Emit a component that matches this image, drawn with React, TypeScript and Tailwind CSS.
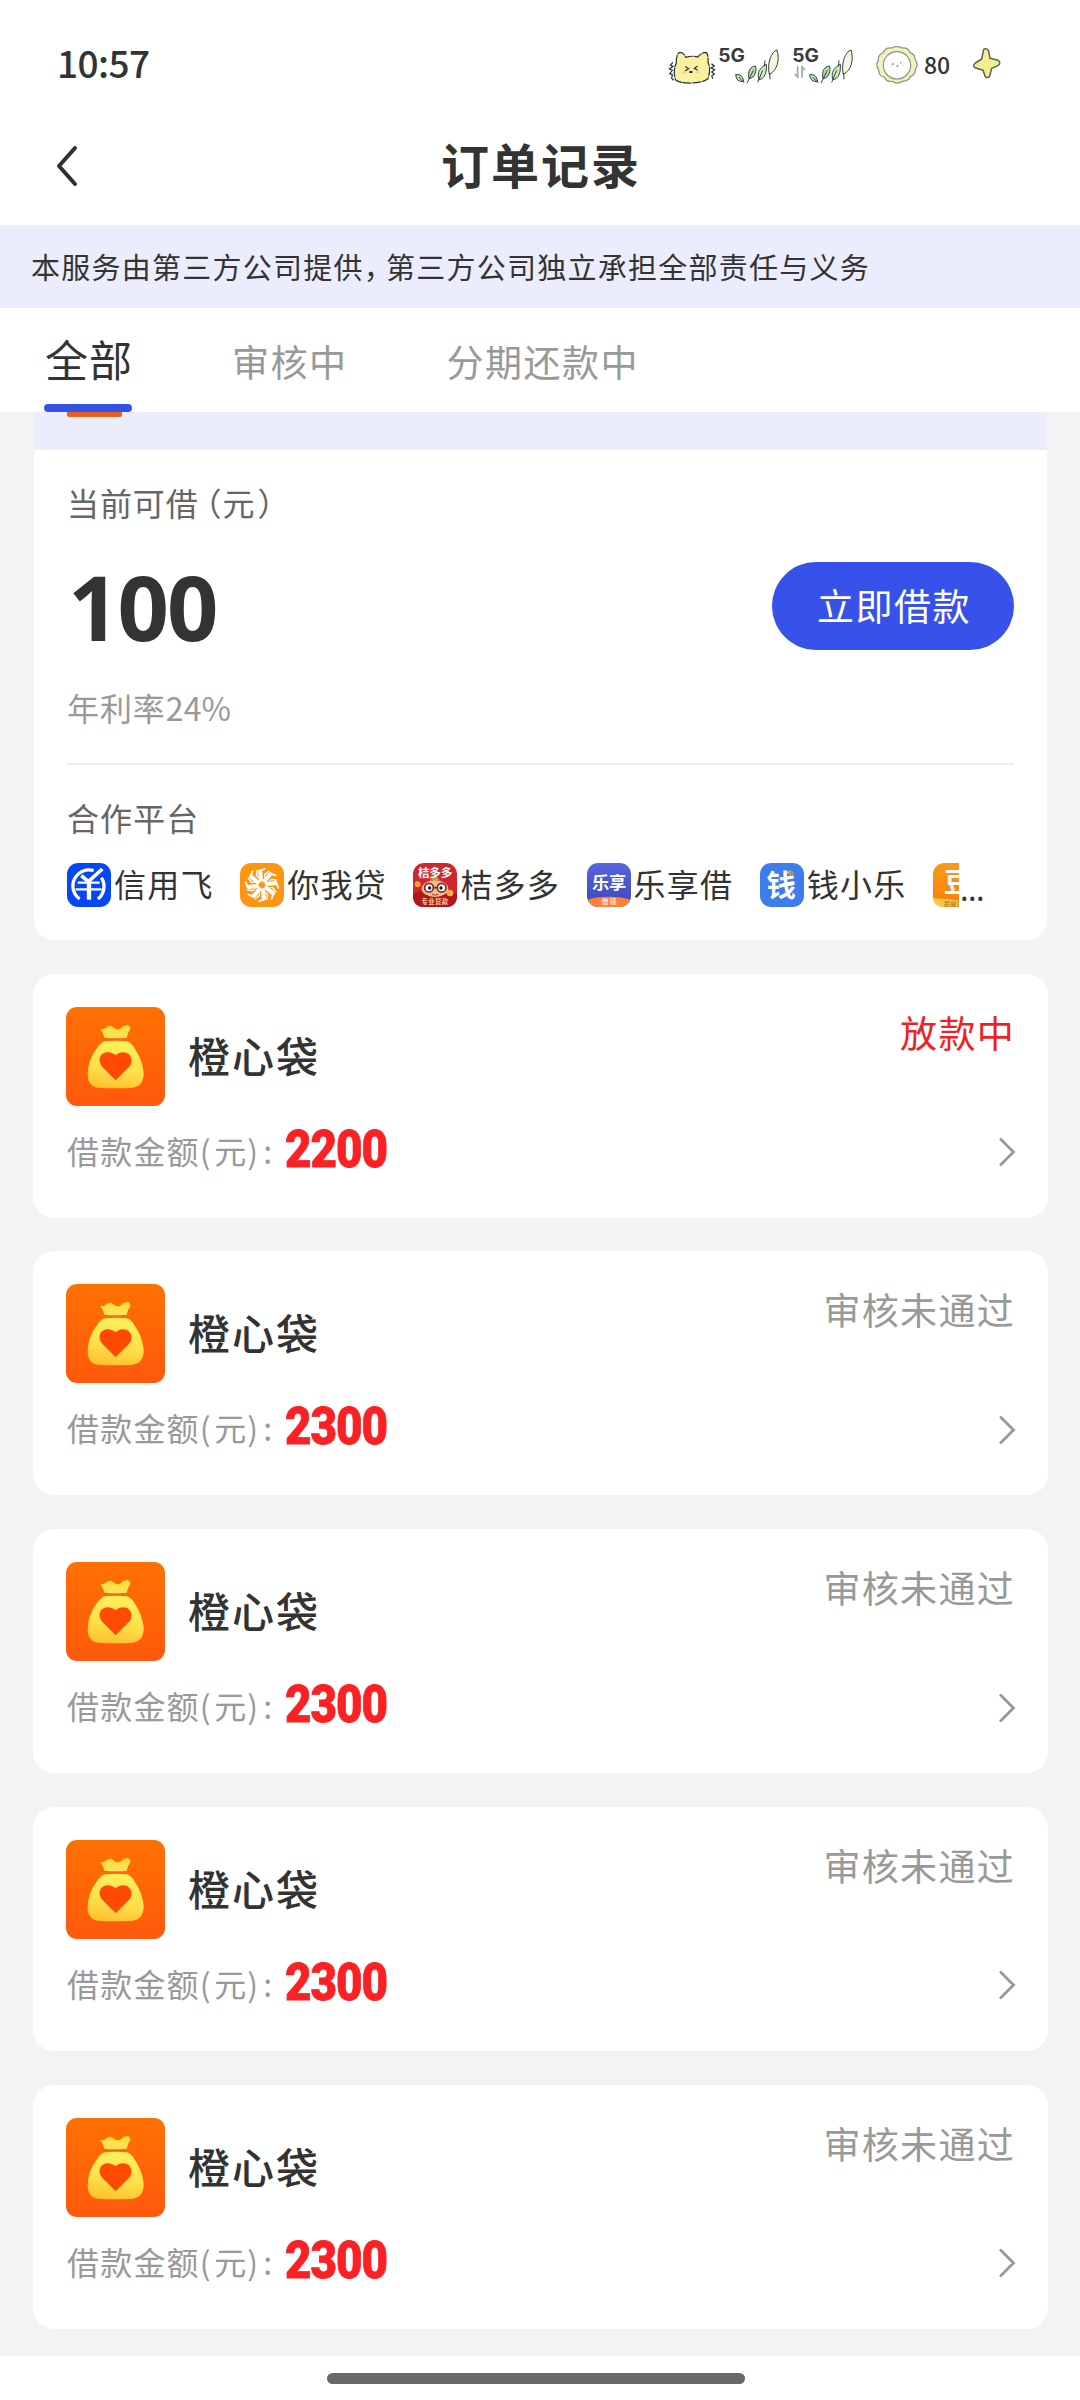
import React, { useState } from 'react';

interface Order {
  id: number;
  name: string;
  amount: number;
  status: string;
  active?: boolean;
}

const ORDERS: Order[] = [
  { id: 1, name: '橙心袋', amount: 2200, status: '放款中', active: true },
  { id: 2, name: '橙心袋', amount: 2300, status: '审核未通过' },
  { id: 3, name: '橙心袋', amount: 2300, status: '审核未通过' },
  { id: 4, name: '橙心袋', amount: 2300, status: '审核未通过' },
  { id: 5, name: '橙心袋', amount: 2300, status: '审核未通过' },
];

const TABS = ['全部', '审核中', '分期还款中'];

const App: React.FC = () => {
  const [activeTab, setActiveTab] = useState('全部');

  return (
    <div className="flex h-[2400px] w-[1080px] flex-col overflow-hidden bg-white font-['Noto_Sans_CJK_SC',sans-serif] text-[#333]">
      <StatusBar />

      {/* Header */}
      <header className="grid h-[115px] shrink-0 grid-cols-3 items-center">
        <button className="-mt-[4px] pl-[54px]">
          <svg width="26" height="42" viewBox="0 0 26 42" fill="none">
            <path d="M21 3 L5 21 L21 39" stroke="#2f2f2f" strokeWidth="4" strokeLinecap="round" strokeLinejoin="round" />
          </svg>
        </button>
        <h1 className="-mt-[9px] pl-[2px] text-center text-[48px] leading-[60px] font-bold tracking-[2px] whitespace-nowrap">订单记录</h1>
      </header>

      <div className="flex h-[83px] shrink-0 items-center bg-[#ebedfd] pl-[31px] text-[29px] leading-[40px] tracking-[1.25px] whitespace-nowrap">
        <p className="-mt-[2px]">
          本服务由第三方公司提供<span className="tracking-[-6.8px]">，</span>第三方公司独立承担全部责任与义务
        </p>
      </div>

      {/* Tabs */}
      <nav className="flex h-[104px] shrink-0 pl-[44px]">
        {TABS.map((tab, i) => (
          <button
            key={tab}
            onClick={() => setActiveTab(tab)}
            className={`relative flex h-full items-center whitespace-nowrap ${i === 0 ? '' : i === 1 ? 'ml-[99px]' : 'ml-[99px]'} ${
              tab === activeTab ? 'pb-[4px] pl-px text-[43px] tracking-[1px]' : 'pt-[3px] text-[37px] tracking-[1.5px] text-[#999]'
            }`}
          >
            <span>{tab}</span>
            {tab === activeTab && <i className="absolute bottom-0 left-0 h-2 w-[88px] rounded-full bg-[#3452e4]" />}
          </button>
        ))}
      </nav>

      {/* Scrolled list */}
      <main className="flex h-[1944px] shrink-0 flex-col overflow-hidden bg-[#f3f3f3] px-[33px]">
        <CreditCard />
        <div className="mt-[33.5px] flex flex-col gap-[33.75px]">
          {ORDERS.map((o) => (
            <OrderCard key={o.id} order={o} />
          ))}
        </div>
      </main>

      <footer className="flex flex-1 justify-center pt-[17px] pr-[8px]">
        <div className="h-[11px] w-[418px] rounded-full bg-[#696969]" />
      </footer>
    </div>
  );
};

const StatusBar: React.FC = () => (
  <div className="flex h-[110px] shrink-0 items-start pl-[57px]">
    <span className="mt-[42px] w-[610px] text-[37px] leading-[40px] font-medium tracking-[-0.6px]">10:57</span>
    <svg className="mt-[50px]" width="50" height="36" viewBox="80 90 150 108" fill="none" stroke="#26303c" strokeWidth="3.6" strokeLinecap="round">
      <path d="M108 130 C107 110 112 98 119 97 C128 97 132 103 137 112 Q154 106 172 111 Q182 99 196 97 Q205 99 203 128 C211 141 208 164 202 177 Q184 189 152 189 Q118 190 106 180 C99 164 101 143 108 130Z" fill="#f9f0a0" strokeDasharray="24 5" />
      <path d="M136 140 l9 6 -10 6 M171 139 l-9 6 9 5" strokeWidth="3.5" />
      <path d="M149 156 h5" strokeWidth="6" />
      <path d="M97 128 l-7 7 8 4 -11 8 9 4 -8 10 8 3 -2 11 5 5 M214 132 l8 6 -10 6 11 5 -9 7 8 6 -8 6 3 7" strokeWidth="3.5" />
      <path d="M126 157 h8 M168 157 h8" stroke="#f5c6a0" strokeWidth="5" />
    </svg>
    <Signal />
    <Signal arrows />
    <svg className="mt-[45px] ml-[17px]" width="44" height="40" viewBox="704 75 132 120" fill="none">
      <path
        d="M754 84 Q770 76 785 84 Q804 82 809 98 Q825 103 824 119 Q837 133 825 147 Q827 163 811 169 Q804 185 788 183 Q770 195 756 184 Q738 187 732 171 Q714 168 716 151 Q704 136 714 122 Q712 104 728 99 Q735 81 754 84Z"
        fill="#f1f3bb"
        stroke="#8b8f84"
        strokeWidth="3.5"
      />
      <circle cx="770" cy="136" r="41" fill="#fff" stroke="#8b8f84" strokeWidth="3.5" />
      <path d="M757 130 v5 M781 126 v4 M769 138 h5" stroke="#777" strokeWidth="4" />
      <path d="M750 139 h5 M786 136 h5" stroke="#f3cfd1" strokeWidth="4" />
    </svg>
    <span className="mt-[51px] ml-[5px] w-[28px] text-[23px] leading-[26px] font-medium">80</span>
    <svg className="mt-[47px] ml-[20px]" width="30" height="33" viewBox="995 81 90 99">
      <path d="M1030 88 Q1040 82 1045 94 L1049 115 L1073 121 Q1083 127 1074 136 L1054 145 L1048 169 Q1041 178 1034 168 L1028 151 L1004 143 Q995 136 1005 129 L1024 117Z" fill="#f3ee91" stroke="#5e6050" strokeWidth="4.5" strokeLinejoin="round" />
    </svg>
  </div>
);

const Signal: React.FC<{ arrows?: boolean }> = ({ arrows }) => (
  <svg className={arrows ? 'mt-[45px] ml-[9px]' : 'mt-[45px] ml-[2px]'} width="65" height="40" viewBox="0 0 195 120" fill="none">
    <text x="-2" y="50" fontFamily="Inter" fontSize="55" fontWeight="700" fill="#3a3a3a" textLength="80" lengthAdjust="spacingAndGlyphs">
      5G
    </text>
    {arrows && (
      <path d="M14 64 V96 L5 87 M27 98 V66 L36 75" stroke="#a6a6a6" strokeWidth="5" />
    )}
    <g stroke="#25343f" strokeWidth="2.8">
      <path d="M50 89 Q70 85 74 109 Q52 113 50 89Z" fill="#c3e5a9" />
      <path d="M59 96 L76 114" />
      <path d="M90 101 C85 78 95 64 109 63 C115 76 107 100 90 101Z" fill="#b5dd9c" />
      <path d="M103 76 L84 114" />
      <path d="M120 104 C112 83 124 67 142 58 C144 81 137 102 120 104Z" fill="#cdeab6" />
      <path d="M136 64 L138 46 M131 76 L116 112" />
      <path d="M151 88 C143 54 158 19 174 15 C183 44 175 77 151 88Z" fill="#f0f8e0" />
      <path d="M152 85 L153 103" />
    </g>
  </svg>
);

const CreditCard: React.FC = () => (
  <section className="ml-px h-[528px] w-[1013px] shrink-0 rounded-b-[20px] bg-white">
    <div className="h-[38px] bg-[#ebedfd] pl-[33px]">
      <div className="h-[5px] w-[55px] rounded-b-[2px] bg-[#ee5f1d]" />
    </div>
    <div className="px-[33px]">
      <p className="pt-[30px] text-[32px] leading-[44px] tracking-[0.9px] text-[#666] [font-feature-settings:'halt']">
        当前可借<span className="ml-[7px]">（</span>元<span className="ml-[2px]">）</span>
      </p>
      <div className="flex h-[161px] items-start justify-between">
        <span className="mt-[37px] pl-px font-['Noto_Sans'] text-[90px] leading-[90px] font-bold tracking-[-2px]">100</span>
        <button className="mt-[38px] h-[88px] w-[242px] rounded-full bg-[#3652ea] pl-[2px] text-[37px] tracking-[1.5px] text-white">立即借款</button>
      </div>
      <p className="border-b-2 border-[#ececec] pb-[34px] text-[32px] leading-[44px] tracking-[0.9px] text-[#999]">
        年利率<span className="tracking-[0.2px]">24%</span>
      </p>
      <p className="mt-[30px] text-[32px] leading-[44px] tracking-[1.1px] text-[#666]">合作平台</p>
      <div className="mt-[24px] flex h-[44px] items-center text-[32px] leading-[44px] tracking-[1.2px] whitespace-nowrap">
        <Partner name="信用飞">
          <rect width="132" height="132" rx="34" fill="#0547f4" />
          <g fill="none" stroke="#fff" strokeWidth="10">
            <path d="M38 108 A48 48 0 0 1 80 23 M103 44 A48 48 0 0 1 93 108" />
            <path d="M32 59 H98 M26 79 H104" strokeWidth="7" />
            <path d="M66 60 V110" strokeWidth="13" />
            <path d="M43 38 L64 56 L106 18" strokeWidth="11" />
          </g>
        </Partner>
        <Partner name="你我贷">
          <rect width="132" height="132" rx="34" fill="#ff9410" />
          {[0, 45, 90, 135, 180, 225, 270, 315].map((deg) => (
            <g key={deg} transform={`rotate(${deg} 66 66)`}>
              <path d="M57 53 L54 24 L62 18 L67 27 L69 54 L63 58Z" fill="#fff" />
              <path d="M55 22 L75 14 L78 18 L60 27Z M72 50 L72 33 L87 22 L89 25 L76 36Z" fill="#fff" />
            </g>
          ))}
        </Partner>
        <Partner name="桔多多">
          <rect width="132" height="132" rx="34" fill="#d1262d" />
          <path d="M0 92 Q66 66 132 92 V98 Q132 132 98 132 H34 Q0 132 0 98Z" fill="#b3161d" />
          <path d="M66 34 L80 52 H52Z" fill="#98b53c" />
          <ellipse cx="66" cy="77" rx="40" ry="25" fill="#f2bc8a" />
          <circle cx="14" cy="64" r="9" fill="#f6a13a" />
          <circle cx="111" cy="90" r="10" fill="#f6b04a" />
          <g fill="#fff" stroke="#6b2f2c" strokeWidth="5">
            <circle cx="48" cy="74" r="13" />
            <circle cx="86" cy="74" r="13" />
            <path d="M61 74 H73" />
          </g>
          <circle cx="50" cy="75" r="5" fill="#402" />
          <circle cx="84" cy="75" r="5" fill="#402" />
          <path d="M57 94 Q66 99 76 94" stroke="#a33" strokeWidth="3" fill="none" />
          <text x="66" y="41" textAnchor="middle" fontSize="35" fontWeight="700" fill="#fff" letterSpacing="-1">桔多多</text>
          <text x="66" y="123" textAnchor="middle" fontSize="19" fontWeight="700" fill="#f8cd9a">专业贷款</text>
        </Partner>
        <Partner name="乐享借">
          <clipPath id="lx">
            <rect width="132" height="132" rx="34" />
          </clipPath>
          <linearGradient id="lxBg" x1="0" y1="0" x2="0" y2="1">
            <stop offset="0" stopColor="#5865e0" />
            <stop offset="1" stopColor="#3c46bd" />
          </linearGradient>
          <g clipPath="url(#lx)">
            <rect width="132" height="132" fill="url(#lxBg)" />
            <ellipse cx="66" cy="134" rx="92" ry="33" fill="#fd8238" />
          </g>
          <text x="66" y="77" textAnchor="middle" fontSize="52" fontWeight="700" fill="#fff" letterSpacing="-1">乐享</text>
          <text x="68" y="123" textAnchor="middle" fontSize="20" fontWeight="700" fill="#ffe3cd" letterSpacing="4">借钱</text>
        </Partner>
        <Partner name="钱小乐">
          <rect width="132" height="132" rx="34" fill="#3d7ceb" />
          <text x="64" y="99" textAnchor="middle" fontSize="88" fontWeight="700" fill="#fff">钱</text>
          <path d="M94 20 L104 30 L94 40 L84 30Z" fill="#c08a4a" />
        </Partner>
        {/* sixth partner is cut off by the ellipsis */}
        <div className="w-[26px] shrink-0 overflow-hidden">
          <svg width="44" height="44" viewBox="0 0 132 132">
            <linearGradient id="dou" x1="0" y1="0" x2="0" y2="1">
              <stop offset="0" stopColor="#f99a1a" />
              <stop offset="1" stopColor="#fb7c0d" />
            </linearGradient>
            <rect width="132" height="132" rx="34" fill="url(#dou)" />
            <path d="M0 106 Q66 108 132 122 Q120 132 98 132 H34 Q2 132 0 106Z" fill="#fbc648" />
            <text x="74" y="87" textAnchor="middle" fontSize="82" fontWeight="700" fill="#fff">豆</text>
            <text x="33" y="128" fontSize="18" fontWeight="700" fill="#b8811f">超级豆</text>
          </svg>
        </div>
        <span className="mt-[8px] ml-px font-['Noto_Sans'] tracking-[-0.6px]">...</span>
      </div>
    </div>
  </section>
);

interface PartnerProps {
  name: string;
  children: React.ReactNode;
}

const Partner: React.FC<PartnerProps> = ({ name, children }) => (
  <div className="flex w-[173.2px] shrink-0 items-center">
    <svg className="mr-[3px] shrink-0" width="44" height="44" viewBox="0 0 132 132">
      {children}
    </svg>
    <span className="-mt-[4px]">{name}</span>
  </div>
);

const OrderCard: React.FC<{ order: Order }> = ({ order }) => (
  <article className="h-[244px] w-[1015px] rounded-[21px] bg-white px-[33px] pt-[33px]">
    <div className="flex items-start">
      <BagIcon />
      <h2 className="mt-[18px] ml-[23px] text-[42px] leading-[60px] font-medium tracking-[2px]">{order.name}</h2>
      <span className={`ml-auto text-[37px] leading-[50px] tracking-[1.3px] ${order.active ? 'text-[#ef1f23]' : 'text-[#999]'}`}>
        {order.status}
      </span>
    </div>
    <div className="mt-[21px] flex h-[46px] items-center">
      <span className="w-[219px] pl-px text-[32px] leading-[44px] tracking-[1.2px] whitespace-nowrap text-[#999]">
        借款金额<span className="tracking-[3.5px]">(</span>元<span className="tracking-[5px]">):</span>
      </span>
      <span className="origin-left scale-x-[0.88] font-['Roboto'] text-[52px] leading-[46px] font-black tracking-[-1.2px] text-[#fa2125] [-webkit-text-stroke:0.8px_#fa2125]">
        {order.amount}
      </span>
      <svg className="mt-[5px] -mr-px ml-auto" width="18" height="32" viewBox="0 0 18 32" fill="none">
        <path d="M2 2.500 L15.500 16 L2 29.500" stroke="#999" strokeWidth="2.800" />
      </svg>
    </div>
  </article>
);

const BagIcon: React.FC = () => (
  <svg className="shrink-0" width="99" height="99" viewBox="0 0 297 297">
    <defs>
      <linearGradient id="bagBg" x1="0" y1="0" x2="0" y2="1">
        <stop offset="0" stopColor="#ff7102" />
        <stop offset="1" stopColor="#ff590d" />
      </linearGradient>
      <linearGradient id="bagTop" x1="0" y1="0" x2="0" y2="1">
        <stop offset="0" stopColor="#fddc30" />
        <stop offset="1" stopColor="#ffe35e" />
      </linearGradient>
      <linearGradient id="bagBody" x1="0.600" y1="0" x2="0.400" y2="1">
        <stop offset="0" stopColor="#fff05c" />
        <stop offset="0.600" stopColor="#ffe04a" />
        <stop offset="1" stopColor="#ffc22f" />
      </linearGradient>
    </defs>
    <rect width="297" height="297" rx="33" fill="url(#bagBg)" />
    <path d="M103 67 Q116 67 126 58 Q134 53 141 60 Q151 70 162 65 Q171 55 184 54 Q194 55 193 67 Q184 79 182 92 Q149 95 115 92 Q114 80 103 67Z" fill="url(#bagTop)" />
    <path d="M117 103 Q149 99 182 103 Q196 106 207 126 Q229 158 233 196 Q234 238 201 242 Q149 245 97 242 Q64 238 65 200 Q66 160 91 126 Q104 106 117 103Z" fill="url(#bagBody)" />
    <path d="M149 220 L110 181 C98 168 98 152 108 142 C121 131 139 136 149 145 C160 134 178 132 190 143 C200 154 198 170 188 181Z" fill="#ff4a04" />
  </svg>
);

export default App;
